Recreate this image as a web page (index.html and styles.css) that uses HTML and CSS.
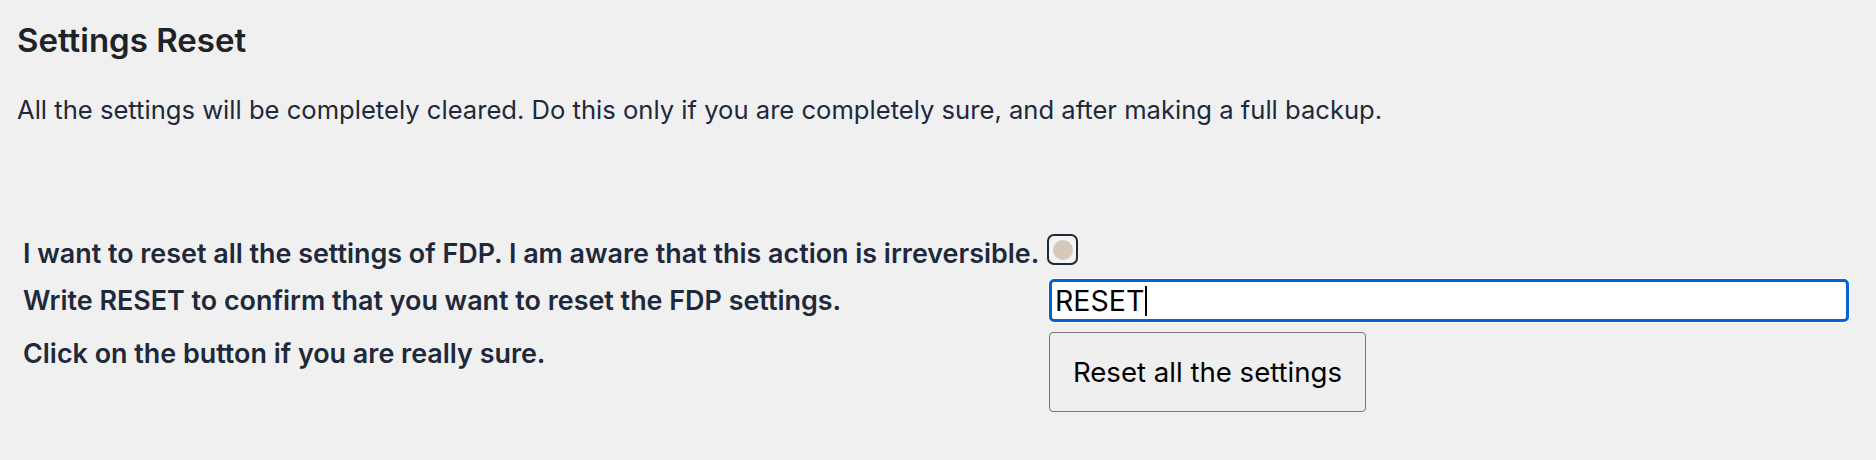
FILE: index.html
```html
<!DOCTYPE html>
<html>
<head>
<meta charset="utf-8">
<title>Settings Reset</title>
<link rel="stylesheet" href="styles.css">
</head>
<body>
<div class="wrap">
  <h2 class="title">Settings Reset</h2>
  <p class="desc">All the settings will be completely cleared. Do this only if you are completely sure, and after making a full backup.</p>
  <div class="form">
    <div class="row row-check">
      <div class="label">I want to reset all the settings of FDP. I am aware that this action is irreversible.</div>
      <div class="control">
        <span class="check" role="checkbox" aria-checked="false"><span class="check-dot"></span></span>
      </div>
    </div>
    <div class="row row-input">
      <div class="label">Write RESET to confirm that you want to reset the FDP settings.</div>
      <div class="control">
        <div class="field"><span class="field-text">RESET</span><span class="caret"></span></div>
      </div>
    </div>
    <div class="row row-button">
      <div class="label">Click on the button if you are really sure.</div>
      <div class="control">
        <button class="btn" type="button">Reset all the settings</button>
      </div>
    </div>
  </div>
</div>
</body>
</html>
```

FILE: styles.css
```css
html, body {
  margin: 0;
  background: #f0f0f0;
}

.wrap {
  padding: 20px 0 0 17px;
  font-family: "Inter", "Noto Sans", sans-serif;
  color: #1e293b;
}

.title {
  margin: 0;
  font-size: 33px;
  line-height: 40px;
  font-weight: 600;
  color: #1d2327;
}

.desc {
  margin: 34px 0 0;
  font-size: 25.6px;
  line-height: 32px;
  font-weight: 400;
}

.form {
  margin-top: 108px;
  padding-left: 6px;
}

.row {
  display: grid;
  grid-template-columns: 1024px 1fr;
  align-items: start;
}

.row-input { margin-top: 9px; }
.row-button { margin-top: 10px; }

.label {
  font-size: 26.9px;
  line-height: 34px;
  font-weight: 600;
  white-space: nowrap;
}

.row-check .label { padding-top: 2px; }
.row-input .label { padding-top: 4px; }
.row-button .label { padding-top: 4px; }

.control {
  display: flex;
  min-width: 0;
}

.check {
  box-sizing: border-box;
  width: 31px;
  height: 31px;
  border: 2.5px solid #1e293b;
  border-radius: 7px;
  background: #f3f3f3;
  display: flex;
  align-items: center;
  justify-content: center;
}

.check-dot {
  width: 20px;
  height: 20px;
  border-radius: 50%;
  background: #d6c8bb;
}

.row-input .control { padding: 0 27px 0 2px; }

.field {
  box-sizing: border-box;
  flex: 1;
  height: 43px;
  border: 3px solid #0761d0;
  border-radius: 5px;
  background: #fff;
  box-shadow: 0 0 0 1px #fff;
  display: flex;
  align-items: center;
  padding-left: 3px;
  font-family: "Inter", sans-serif;
  font-size: 28.5px;
  color: #000;
}

.field-text {
  line-height: 34px;
}

.caret {
  width: 2px;
  height: 30px;
  background: #000;
  margin-left: 1px;
}

.row-button .control { padding-left: 2px; }

.btn {
  box-sizing: border-box;
  width: 317px;
  height: 80px;
  margin: 0;
  padding: 0;
  border: 1.5px solid #777777;
  border-radius: 4px;
  background: #efefef;
  color: #000;
  font-family: "Inter", sans-serif;
  font-size: 27.6px;
  font-weight: 400;
  line-height: 34px;
  cursor: pointer;
}
```
